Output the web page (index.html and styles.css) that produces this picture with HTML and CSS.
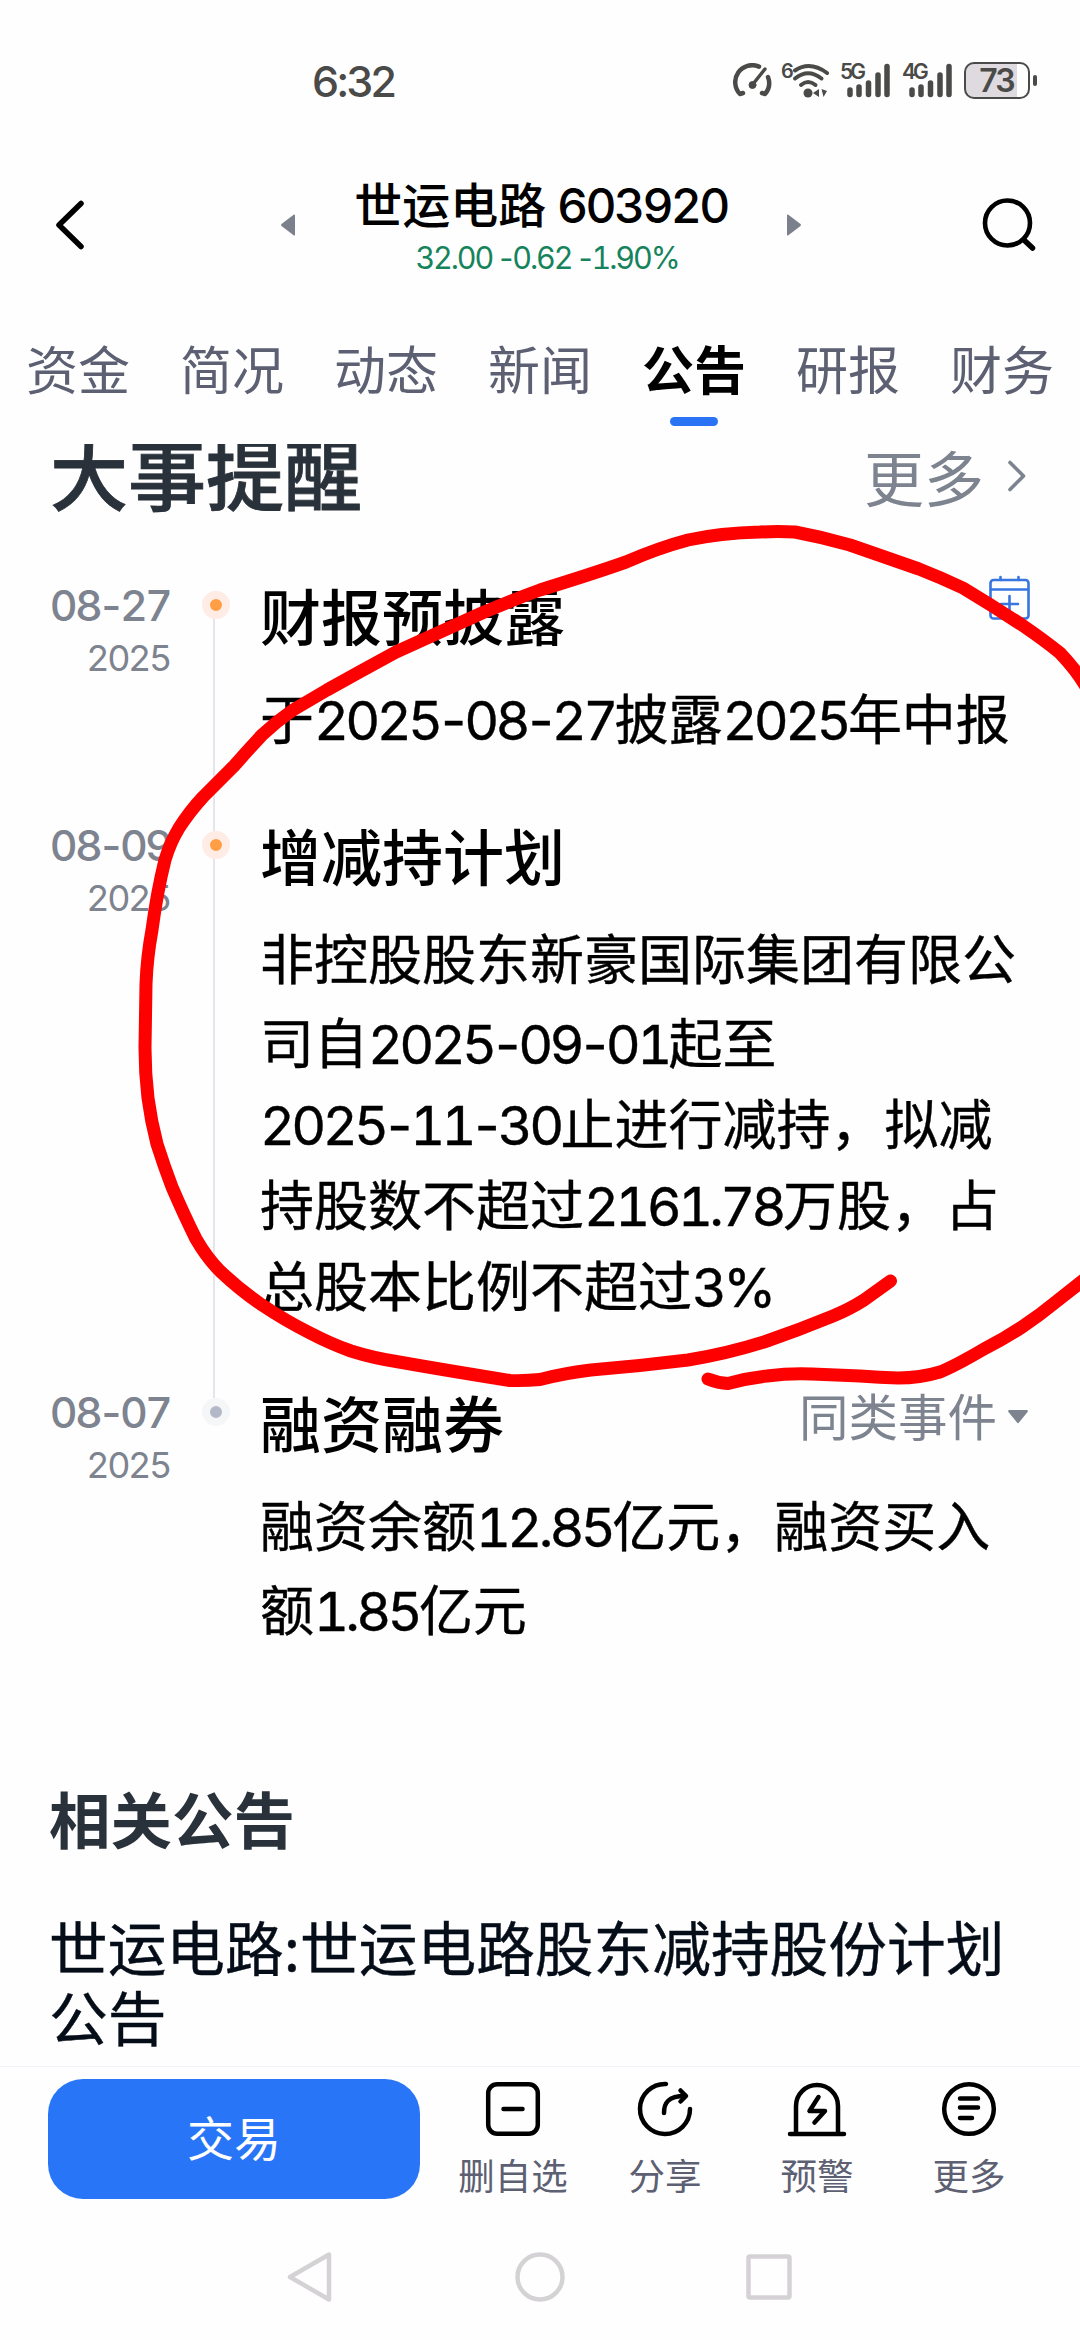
FILE: index.html
```html
<!DOCTYPE html>
<html lang="zh-CN">
<head>
    <meta charset="UTF-8">
    <meta name="viewport" content="width=device-width, initial-scale=1.0">
    <title>世运电路 603920</title>
    <link rel="stylesheet" href="styles.css">
</head>

<body>
    <div class="status-bar">
        <span class="clock">6:32</span>
        <div class="status-icons">
            <svg class="icon-gauge" width="39" height="35" viewBox="0 0 39 35" fill="none" stroke="#4a4a48" stroke-width="4.5" stroke-linecap="round" stroke-linejoin="round">
                <path d="M10 30 L7 31 A17 17 0 0 1 26 3.6"/>
                <path d="M35 14 A17 17 0 0 1 32 31 L29 30"/>
                <path d="M32 6 L20 21" stroke-width="3.5"/>
                <circle cx="19.500" cy="22" r="3.500" fill="#4a4a48" stroke-width="1"/>
            </svg>
            <span class="wifi-gen">6</span>
            <svg class="icon-wifi" width="39" height="35" viewBox="0 0 39 35" fill="none" stroke="#4a4a48" stroke-width="4" stroke-linecap="round">
                <path d="M3 7.500 Q18 -2.500 35 10"/>
                <path d="M3 15.500 Q16 5 29.500 15.500"/>
                <path d="M9 22 Q16 16 23.500 22"/>
                <circle cx="16" cy="30" r="4.500" fill="#4a4a48" stroke="none"/>
                <path d="M21 30 L27 26 V34 Z M29.500 26 L35 28 L31.500 34 Z" fill="#4a4a48" stroke="none"/>
            </svg>
            <div class="signal">
                <span class="signal-label">5G</span>
                <svg width="43" height="35" viewBox="0 0 43 35" stroke="#4a4a48" stroke-width="5.500" stroke-linecap="round">
                    <path d="M3 27V31.500M12 24V31.500M21.500 20V31.500M31 12V31.500M40 3.500V31.500"/>
                </svg>
            </div>
            <div class="signal">
                <span class="signal-label">4G</span>
                <svg width="43" height="35" viewBox="0 0 43 35" stroke="#4a4a48" stroke-width="5.500" stroke-linecap="round">
                    <path d="M3 27V31.500M12 24V31.500M21.500 20V31.500M31 12V31.500M40 3.500V31.500"/>
                </svg>
            </div>
            <div class="battery">73</div>
            <div class="battery-nub"></div>
        </div>
    </div>

    <header class="header">
        <svg class="back" width="40" height="60" viewBox="0 0 40 60" fill="none" stroke="#000" stroke-width="5.500" stroke-linecap="round" stroke-linejoin="round">
            <path d="M31 8.500 L9 30 L31 51.500"/>
        </svg>
        <div class="stock">
            <svg width="14" height="22" viewBox="0 0 14 22" fill="#7b808c"><path d="M0.500 10 L13 0.500 Q14 0.500 14 1 V21 Q14 21.500 13 21.500 L0.500 12 Q-0.300 11 0.500 10Z"/></svg>
            <div class="stock-info">
                <h1>世运电路 <span class="num">603920</span></h1>
                <p>32.00 <span class="dash">-</span>0.62 <span class="dash">-</span>1.90%</p>
            </div>
            <svg width="14" height="22" viewBox="0 0 14 22" fill="#7b808c"><path d="M13.500 10 L1 0.500 Q0 0.500 0 1 V21 Q0 21.500 1 21.500 L13.500 12 Q14.300 11 13.500 10Z"/></svg>
        </div>
        <svg class="search" width="60" height="60" viewBox="0 0 60 60" fill="none" stroke="#000" stroke-width="4.600" stroke-linecap="round">
            <circle cx="30.500" cy="28" r="22.500"/>
            <path d="M47 45 L55.500 53" stroke-width="5.500"/>
        </svg>
    </header>

    <nav class="tabs">
        <a class="tab">资金</a>
        <a class="tab">简况</a>
        <a class="tab">动态</a>
        <a class="tab">新闻</a>
        <a class="tab active">公告</a>
        <a class="tab">研报</a>
        <a class="tab">财务</a>
    </nav>

    <main class="content">
        <div class="section-head">
            <h2>大事提醒</h2>
            <a class="more">更多
                <svg width="20" height="34" viewBox="0 0 20 34" fill="none" stroke="#7d838f" stroke-width="3.600" stroke-linecap="round" stroke-linejoin="round"><path d="M3 3.500 L16.500 17 L3 30.500"/></svg>
            </a>
        </div>

        <div class="timeline">
            <div class="event">
                <div class="event-date"><b>08<span class="dash">-</span>27</b><span class="year">2025</span></div>
                <div class="event-axis"><i class="dot"></i></div>
                <div class="event-body">
                    <div class="event-title">
                        <h3>财报预披露</h3>
                        <svg class="calendar" width="44" height="46" viewBox="0 0 44 46" fill="none" stroke="#3775e0" stroke-width="2.600" stroke-linecap="round">
                            <rect x="2.500" y="5" width="38" height="38.500" rx="3"/>
                            <path d="M3 14.500 H40 M12.500 2 V5 M30.500 2 V5 M21.500 21 V37 M13 29 H30"/>
                        </svg>
                    </div>
                    <p>于<span class="num">2025<span class="dash">-</span>08<span class="dash">-</span>27</span>披露<span class="num">2025</span>年中报</p>
                </div>
            </div>
            <div class="event event-long">
                <div class="event-date"><b>08<span class="dash">-</span>09</b><span class="year">2025</span></div>
                <div class="event-axis"><i class="dot"></i></div>
                <div class="event-body">
                    <div class="event-title">
                        <h3>增减持计划</h3>
                    </div>
                    <p>非控股股东新豪国际集团有限公<br>司自<span class="num">2025<span class="dash">-</span>09<span class="dash">-</span>01</span>起至<br><span class="num">2025<span class="dash">-</span>11<span class="dash">-</span>30</span>止进行减持，拟减<br>持股数不超过<span class="num">2161.78</span>万股，占<br>总股本比例不超过<span class="num">3%</span></p>
                </div>
            </div>
            <div class="event event-last">
                <div class="event-date"><b>08<span class="dash">-</span>07</b><span class="year">2025</span></div>
                <div class="event-axis"><i class="dot dot-gray"></i></div>
                <div class="event-body">
                    <div class="event-title">
                        <h3>融资融券</h3>
                        <a class="similar">同类事件
                            <svg width="22" height="16" viewBox="0 0 22 16" fill="#7d838f"><path d="M2 1 H20 Q21.500 1.500 20.500 3 L12 13.500 Q11 14.800 10 13.500 L1.500 3 Q0.500 1.500 2 1Z"/></svg>
                        </a>
                    </div>
                    <p>融资余额<span class="num">12.85</span>亿元，融资买入<br>额<span class="num">1.85</span>亿元</p>
                </div>
            </div>
        </div>

        <div class="related">
            <h2>相关公告</h2>
            <p>世运电路:世运电路股东减持股份计划<br>公告</p>
        </div>
    </main>

    <footer class="bottom-bar">
        <button class="trade">交易</button>
        <div class="actions">
            <a class="action">
                <svg width="60" height="60" viewBox="0 0 60 60" fill="none" stroke="#000" stroke-width="4.500" stroke-linecap="round">
                    <rect x="5.200" y="5.200" width="49.600" height="49.600" rx="9"/>
                    <path d="M20.500 30 H39.500"/>
                </svg>
                <span>删自选</span>
            </a>
            <a class="action">
                <svg width="60" height="60" viewBox="0 0 60 60" fill="none" stroke="#000" stroke-width="4.500" stroke-linecap="round" stroke-linejoin="round">
                    <path d="M31 5 A25 25 0 1 0 55 30"/>
                    <path d="M29 34 C29 24 33 17 50 17"/>
                    <path d="M45.500 11.500 L51 17 L45.500 22.500"/>
                </svg>
                <span>分享</span>
            </a>
            <a class="action">
                <svg width="60" height="60" viewBox="0 0 60 60" fill="none" stroke="#000" stroke-width="4.500" stroke-linecap="round" stroke-linejoin="round">
                    <path d="M3 55 H57 M9 55 V27 A21 21 0 0 1 51 27 V55"/>
                    <path d="M31.500 18 L22.500 32 H38 L27.500 43.500"/>
                </svg>
                <span>预警</span>
            </a>
            <a class="action">
                <svg width="60" height="60" viewBox="0 0 60 60" fill="none" stroke="#000" stroke-width="4.500" stroke-linecap="round">
                    <circle cx="30" cy="30" r="24.800"/>
                    <path d="M21 19.500 H39 M21 28.500 H39 M21 39 H33"/>
                </svg>
                <span>更多</span>
            </a>
        </div>
    </footer>

    <div class="system-nav">
        <svg width="54" height="54" viewBox="0 0 54 54" fill="none" stroke="#d5d2d6" stroke-width="4.500" stroke-linejoin="round"><path d="M6 27 L45 4.500 V49.500 Z"/></svg>
        <svg width="54" height="54" viewBox="0 0 54 54" fill="none" stroke="#d5d2d6" stroke-width="4.500"><circle cx="27" cy="27" r="22.500"/></svg>
        <svg width="54" height="54" viewBox="0 0 54 54" fill="none" stroke="#d5d2d6" stroke-width="4.500"><rect x="6.500" y="6.500" width="41" height="41" rx="1.500"/></svg>
    </div>

    <!-- hand drawn red circle over the page -->
    <svg class="marker" width="1080" height="2340" viewBox="0 0 1080 2340">
        <path d="M1090 694 Q1080 674 1060 653 Q1044 640 1022 625 Q993 606 963 588 Q942 578 919 569 L850 545 Q822 537 795 532 Q778 531 760 532 Q720 533 688 540 Q658 548 626 562 Q595 573 540 590 Q515 599 482 613 L396 652 Q361 671 327 690 L293 710 Q277 721 262 735 Q248 750 234 766 Q219 781 203 797 Q190 811 179 828 Q170 843 165 860 Q157 892 152 930 Q147 957 146 984 L145 1048 Q145 1073 148 1098 Q151 1121 157 1144 Q164 1166 172 1187 Q184 1215 196 1239 Q207 1258 220 1271 Q240 1290 262 1305 Q286 1321 310 1333 Q331 1344 351 1351 Q373 1358 399 1362 Q450 1371 510 1380.500 Q525 1381 540 1379.500 Q565 1373 591 1370 Q640 1366 688 1360 Q726 1354 764 1342 Q799 1330 833 1316 Q850 1309 864 1300 L890.500 1281"/>
        <path d="M708 1379 Q718 1383 728 1383.500 Q748 1378 767 1376 Q790 1373 812 1374 L860 1376 Q880 1377.500 898 1378 Q920 1378 940 1372 Q955 1366 984 1349 Q1004 1339 1022 1327 Q1040 1315 1057 1301 L1090 1275"/>
    </svg>
</body>

</html>
```
FILE: styles.css
```css
* {
    box-sizing: border-box;
}

body {
    margin: 0;
    width: 1080px;
    height: 2340px;
    position: relative;
    overflow: hidden;
    background-color: #fefefe;
    color: #000;
    font-family: "Noto Sans CJK SC", sans-serif;
}

h1, h2, h3, p {
    margin: 0;
}

svg {
    display: block;
    flex: none;
}

.num {
    font-family: Inter, "Noto Sans CJK SC", sans-serif;
    font-variant-numeric: tabular-nums;
    letter-spacing: -0.068em;
    line-height: 1;
}

.dash {
    margin: 0 -0.06em;
}

/* status bar */
.status-bar {
    height: 160px;
    padding: 0 43px 0 312px;
    display: flex;
    align-items: center;
    justify-content: space-between;
    color: #4a4a48;
    font-family: Inter, sans-serif;
}

.clock {
    font-size: 43px;
    font-weight: 500;
    letter-spacing: -2.9px;
    line-height: 60px;
    padding-top: 2px;
}

.status-icons {
    display: flex;
    align-items: center;
}

.wifi-gen {
    align-self: flex-start;
    width: 10px;
    margin-left: 9px;
    margin-right: 1px;
    font-size: 20px;
    font-weight: 600;
    letter-spacing: -2px;
    line-height: 18px;
}

.icon-wifi {
    margin-right: 9px;
}

.signal {
    position: relative;
    padding-left: 7px;
    margin-right: 12px;
}

.signal-label {
    position: absolute;
    left: 0;
    top: 0;
    font-size: 21px;
    font-weight: 600;
    letter-spacing: -3px;
    line-height: 18px;
}

.battery {
    width: 66px;
    height: 37px;
    border: 2.5px solid #4a4a48;
    border-radius: 10px;
    background: linear-gradient(to right, #dedadf 51px, #fefefe 51px);
    font-size: 32px;
    font-weight: 600;
    letter-spacing: -2px;
    line-height: 33px;
    text-align: center;
    padding-right: 1px;
}

.battery-nub {
    width: 4px;
    height: 11px;
    margin-left: 3px;
    border-radius: 2px;
    background-color: #4a4a48;
}

/* header */
.header {
    height: 130px;
    padding: 0 43px 0 50px;
    display: flex;
    align-items: center;
    justify-content: space-between;
}

.stock {
    width: 520px;
    margin-left: 15px;
    display: flex;
    align-items: center;
    justify-content: space-between;
}

.stock-info {
    text-align: center;
}

.stock-info h1 {
    font-size: 48px;
    font-weight: 500;
    line-height: 60px;
}

.stock-info .num {
    letter-spacing: -0.055em;
}

.stock-info p {
    margin-top: 6px;
    padding-left: 12px;
    color: #15835b;
    font-family: Inter, sans-serif;
    font-size: 30.500px;
    font-variant-numeric: tabular-nums;
    letter-spacing: -2.1px;
    line-height: 40px;
}

/* tabs */
.tabs {
    height: 154px;
    padding: 33px 26px 0;
    display: flex;
    justify-content: space-between;
}

.tab {
    color: #5c6072;
    font-size: 52px;
    line-height: 90px;
}

.tab.active {
    color: #000;
    font-weight: 700;
}

.tab.active::after {
    content: "";
    display: block;
    width: 48px;
    height: 9px;
    margin: 4px auto 0;
    border-radius: 5px;
    background-color: #2b73f5;
}

/* content */
.content {
    height: 1622px;
    overflow: hidden;
}

.section-head {
    height: 100px;
    margin-top: -23px;
    padding: 0 53px 0 50px;
    display: flex;
    justify-content: space-between;
}

.section-head h2 {
    color: #29313a;
    font-size: 78px;
    font-weight: 500;
    line-height: 100px;
    -webkit-text-stroke: 0.8px #29313a;
}

.more {
    display: flex;
    align-items: center;
    gap: 23px;
    padding-top: 10px;
    color: #7d838f;
    font-size: 60px;
    line-height: 100px;
}

.timeline {
    margin-top: 54px;
}

.event {
    display: flex;
    height: 240px;
}

.event-long {
    height: 567px;
}

.event-last {
    height: 270px;
}

.event-date {
    width: 170px;
    display: flex;
    flex-direction: column;
    align-items: flex-end;
    color: #7d838f;
    font-family: Inter, sans-serif;
    font-variant-numeric: tabular-nums;
}

.event-date b {
    font-size: 43px;
    font-weight: 500;
    letter-spacing: -2.8px;
    line-height: 60px;
}

.year {
    font-size: 36px;
    letter-spacing: -2.4px;
    line-height: 44px;
    padding-top: 1px;
}

.event-axis {
    width: 28px;
    margin: 16px 0 -16px 32px;
    background: linear-gradient(#e5e6ec, #e5e6ec) 11px 0 / 2px 100% no-repeat;
}

.event-last .event-axis {
    background: none;
}

.dot {
    display: block;
    width: 28px;
    height: 28px;
    border: 8px solid #feece5;
    border-radius: 50%;
    background-color: #ff9e45;
}

.dot-gray {
    border-color: #f5f6f8;
    background-color: #b3b8c6;
}

.event-body {
    flex: 1;
    padding-left: 30px;
}

.event-title {
    display: flex;
    align-items: flex-start;
    justify-content: space-between;
    padding-right: 48px;
}

.event-title h3 {
    font-size: 61px;
    font-weight: 500;
    line-height: 80px;
}

.calendar {
    margin-top: 0;
}

.similar {
    display: flex;
    align-items: center;
    gap: 10px;
    margin-right: 3px;
    color: #7d838f;
    font-size: 49.500px;
    line-height: 66px;
}

.similar svg {
    margin-top: 3px;
}

.event-body p {
    margin-top: 18px;
    font-size: 54px;
    line-height: 81px;
    white-space: nowrap;
    -webkit-text-stroke: 0.4px #000;
}

.event-body p::first-line {
    line-height: 87px;
}

.related {
    padding: 126px 49px 0;
}

.related h2 {
    color: #29313a;
    font-size: 61.500px;
    font-weight: 700;
    line-height: 80px;
}

.related p {
    margin-top: 53px;
    color: #050d18;
    font-size: 58.700px;
    line-height: 70px;
    white-space: nowrap;
    -webkit-text-stroke: 0.4px #050d18;
}

/* bottom bar */
.bottom-bar {
    height: 148px;
    border-top: 1px solid #f2f3f8;
    padding: 12px 35px 0 48px;
    display: flex;
}

.trade {
    width: 372px;
    height: 120px;
    padding: 0 0 8px;
    border: none;
    border-radius: 35px;
    background-color: #2975f8;
    color: #fff;
    font-family: inherit;
    font-size: 47px;
}

.actions {
    flex: 1;
    display: grid;
    grid-template-columns: repeat(4, 1fr);
    margin-left: 17px;
}

.action {
    display: flex;
    flex-direction: column;
    align-items: center;
    gap: 16px;
    color: #5c6072;
    font-size: 36.500px;
    line-height: 40px;
}

.system-nav {
    height: 126px;
    padding: 0 284px;
    display: flex;
    align-items: center;
    justify-content: space-between;
}

.marker {
    position: absolute;
    left: 0;
    top: 0;
    fill: none;
    stroke: #fe0000;
    stroke-width: 13px;
    stroke-linecap: round;
    stroke-linejoin: round;
    pointer-events: none;
}
```
